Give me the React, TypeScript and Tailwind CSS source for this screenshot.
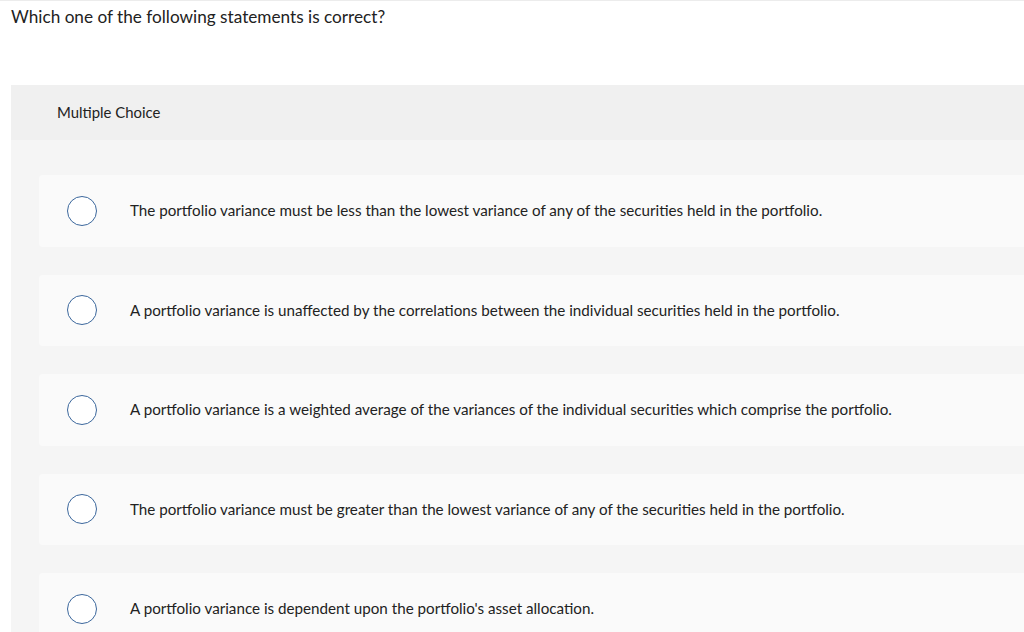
const options = [
  "The portfolio variance must be less than the lowest variance of any of the securities held in the portfolio.",
  "A portfolio variance is unaffected by the correlations between the individual securities held in the portfolio.",
  "A portfolio variance is a weighted average of the variances of the individual securities which comprise the portfolio.",
  "The portfolio variance must be greater than the lowest variance of any of the securities held in the portfolio.",
  "A portfolio variance is dependent upon the portfolio's asset allocation.",
];

export default function App() {
  return (
    <div
      className="min-h-[632px] bg-white border-t border-[#ececec] text-[#222] overflow-hidden"
      style={{ fontFamily: "Lato, 'Liberation Sans', sans-serif" }}
    >
      <h1 className="pl-[11px] pt-[6px] text-[17.2px] leading-[20px] font-normal">
        Which one of the following statements is correct?
      </h1>

      <div className="ml-[11px] mt-[58px] bg-[#f5f5f5]">
        <div className="bg-[#f0f0f0] h-[55px] flex items-center pl-[46px] text-[14.9px]">
          Multiple Choice
        </div>
        <div className="pl-[28px] pt-[35px] flex flex-col gap-[28px]">
          {options.map((text) => (
            <div
              key={text}
              className="bg-[#fafafa] rounded-l-[4px] h-[71.5px] flex items-center"
            >
              <span className="ml-[28px] w-[30px] h-[30px] rounded-full border-[1.5px] border-[#3b679c] bg-white shrink-0" />
              <span className="ml-[33px] text-[15.2px] text-[#222]">{text}</span>
            </div>
          ))}
        </div>
      </div>
    </div>
  );
}
